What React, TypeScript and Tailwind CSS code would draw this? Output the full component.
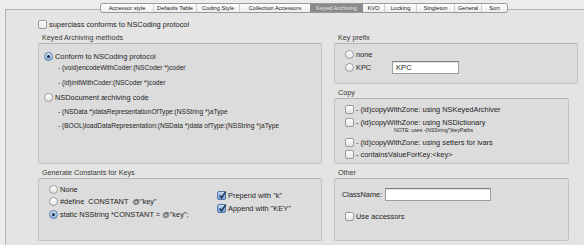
import React from 'react';

const tabs = [
  { label: 'Accessor style', w: 'w-[52px]' },
  { label: 'Defaults Table', w: 'w-[43px]' },
  { label: 'Coding Style', w: 'w-[43px]' },
  { label: 'Collection Accessors', w: 'w-[71px]' },
  { label: 'Keyed Archiving', w: 'w-[53px]', on: true },
  { label: 'KVO', w: 'w-[21px]' },
  { label: 'Locking', w: 'w-[32px]' },
  { label: 'Singleton', w: 'w-[38px]' },
  { label: 'General', w: 'w-[27px]' },
  { label: 'Sort', w: 'w-[26px]' },
];

function Radio({ on }: { on?: boolean }) {
  return (
    <span
      className={`flex h-[9px] w-[9px] shrink-0 items-center justify-center rounded-full border ${
        on
          ? 'border-[#5b7fae] bg-linear-to-b from-[#d6e5f7] to-[#8ab1e0]'
          : 'border-[#9c9c9c] bg-linear-to-b from-white to-[#e4e4e4]'
      }`}
    >
      {on && <span className="h-[3px] w-[3px] rounded-full bg-[#1d2b3f]" />}
    </span>
  );
}

function Check({ on }: { on?: boolean }) {
  return (
    <span
      className={`relative flex h-[9px] w-[9px] shrink-0 items-center justify-center rounded-[2px] border ${
        on
          ? 'border-[#5577a8] bg-linear-to-b from-[#c4dbf5] to-[#6f9fdc]'
          : 'border-[#9c9c9c] bg-linear-to-b from-white to-[#e4e4e4]'
      }`}
    >
      {on && (
        <svg viewBox="0 0 9 9" className="absolute -top-[1px] left-0 h-[9px] w-[9px] overflow-visible">
          <path d="M1.6 4.4 L3.5 6.8 L7.8 0.6" fill="none" stroke="#1b2a48" strokeWidth="1.4" />
        </svg>
      )}
    </span>
  );
}

function Label({ children }: { children: React.ReactNode }) {
  return <div className="h-[10px] pl-[4px] text-[7.2px] leading-[10px] text-[#383838]">{children}</div>;
}

function Code({ children, className = '' }: { children: React.ReactNode; className?: string }) {
  return <div className={`ml-[14px] h-[10px] text-[6.6px] leading-[10px] text-[#1e1e1e] ${className}`}>{children}</div>;
}

export default function App() {
  return (
    <div className="relative h-[245px] w-[584px] overflow-hidden bg-[#ececec] font-['Liberation_Sans',Arial,sans-serif] text-[7.4px] text-[#1c1c1c]">
      {/* tab view frame */}
      <div className="ml-[5px] mt-[9px] h-[250px] border-l border-t border-[#b1b1b1] bg-[#e4e4e4] pl-[32px] pt-[10px]">
        <div className="flex h-[9px] items-center gap-[2px]">
          <Check />
          <span className="leading-[9px]">superclass conforms to NSCoding protocol</span>
        </div>

        <div className="mt-[4px] flex gap-[12px]">
          {/* left column */}
          <div className="w-[284px]">
            <Label>Keyed Archiving methods</Label>
            <div className="h-[121px] rounded-[2px] border border-[#c3c3c3] border-t-[#b4b4b4] bg-[#dcdcdc] pl-[5px] pt-[8px]">
              <div className="flex h-[9px] items-center gap-[2px]">
                <Radio on />
                <span>Conform to NSCoding protocol</span>
              </div>
              <Code className="mt-[2px]">- (void)encodeWithCoder:(NSCoder *)coder</Code>
              <Code className="mt-[5px]">- (id)initWithCoder:(NSCoder *)coder</Code>
              <div className="mt-[5px] flex h-[9px] items-center gap-[2px]">
                <Radio />
                <span>NSDocument archiving code</span>
              </div>
              <Code className="mt-[5px]">- (NSData *)dataRepresentationOfType:(NSString *)aType</Code>
              <Code className="mt-[4px]">- (BOOL)loadDataRepresentation:(NSData *)data ofType:(NSString *)aType</Code>
            </div>

            <div className="mt-[4px]">
              <Label>Generate Constants for Keys</Label>
            </div>
            <div className="flex h-[63px] rounded-[2px] border border-[#c3c3c3] border-t-[#b4b4b4] bg-[#dcdcdc] pl-[10px]">
              <div className="w-[168px] pt-[6px]">
                <div className="flex h-[9px] items-center gap-[2px]">
                  <Radio />
                  <span>None</span>
                </div>
                <div className="mt-[3px] flex h-[9px] items-center gap-[2px]">
                  <Radio />
                  <span className="whitespace-pre">#define  CONSTANT  @"key"</span>
                </div>
                <div className="mt-[4px] flex h-[9px] items-center gap-[2px]">
                  <Radio on />
                  <span>static NSString *CONSTANT = @"key";</span>
                </div>
              </div>
              <div className="pt-[12px]">
                <div className="flex h-[9px] items-center gap-[2px]">
                  <Check on />
                  <span>Prepend with "k"</span>
                </div>
                <div className="mt-[4px] flex h-[9px] items-center gap-[2px]">
                  <Check on />
                  <span>Append with "KEY"</span>
                </div>
              </div>
            </div>
          </div>

          {/* right column */}
          <div className="w-[244px]">
            <Label>Key prefix</Label>
            <div className="h-[41px] rounded-[2px] border border-[#c3c3c3] border-t-[#b4b4b4] bg-[#dcdcdc] pl-[10px] pt-[6px]">
              <div className="flex h-[9px] items-center gap-[2px]">
                <Radio />
                <span>none</span>
              </div>
              <div className="mt-[2px] flex h-[13px] items-center gap-[2px]">
                <Radio />
                <span className="w-[34px]">KPC</span>
                <div className="flex h-[13px] w-[67px] items-center border border-[#9d9d9d] border-t-[#7f7f7f] bg-white pl-[3px] text-[7.6px] shadow-[inset_0_1px_1px_rgba(0,0,0,0.12)]">
                  KPC
                </div>
              </div>
            </div>

            <div className="mt-[4px]">
              <Label>Copy</Label>
            </div>
            <div className="h-[66px] w-[235px] rounded-[2px] border border-[#c3c3c3] border-t-[#b4b4b4] bg-[#dcdcdc] pl-[10px] pt-[6px]">
              <div className="flex h-[9px] items-center gap-[2px]">
                <Check />
                <span>- (id)copyWithZone: using NSKeyedArchiver</span>
              </div>
              <div className="mt-[4px] flex h-[9px] items-center gap-[2px]">
                <Check />
                <span>- (id)copyWithZone: using NSDictionary</span>
              </div>
              <div className="ml-[49px] h-[6px] text-[5.2px] leading-[6px] text-[#2a2a2a]">NOTE: uses -(NSString*)keyPaths</div>
              <div className="mt-[5px] flex h-[9px] items-center gap-[2px]">
                <Check />
                <span>- (id)copyWithZone: using setters for ivars</span>
              </div>
              <div className="mt-[3px] flex h-[9px] items-center gap-[2px]">
                <Check />
                <span>- containsValueForKey:&lt;key&gt;</span>
              </div>
            </div>

            <div className="mt-[4px]">
              <Label>Other</Label>
            </div>
            <div className="h-[63px] w-[235px] rounded-[2px] border border-[#c3c3c3] border-t-[#b4b4b4] bg-[#dcdcdc] pl-[7px] pt-[9px]">
              <div className="flex h-[13px] items-center gap-[3px]">
                <span className="w-[40px]">ClassName:</span>
                <div className="h-[13px] w-[106px] border border-[#9d9d9d] border-t-[#7f7f7f] bg-white shadow-[inset_0_1px_1px_rgba(0,0,0,0.12)]" />
              </div>
              <div className="ml-[3px] mt-[11px] flex h-[9px] items-center gap-[2px]">
                <Check />
                <span>Use accessors</span>
              </div>
            </div>
          </div>
        </div>
      </div>

      {/* segmented tab control over the frame's top edge */}
      <div className="absolute left-[100px] top-[3px] flex h-[10px] overflow-hidden rounded-[3px] border border-[#9a9a9a] bg-linear-to-b from-white to-[#ededed] text-[5.7px] leading-[8px] text-[#222]">
        {tabs.map((t, i) => (
          <div
            key={t.label}
            className={`flex shrink-0 items-center justify-center whitespace-nowrap ${t.w} ${
              t.on ? 'bg-[#8a8a8a] text-[#e6e6e6]' : ''
            } ${i > 0 && !t.on && !tabs[i - 1].on ? 'border-l border-[#cfcfcf]' : ''}`}
          >
            {t.label}
          </div>
        ))}
      </div>
    </div>
  );
}
